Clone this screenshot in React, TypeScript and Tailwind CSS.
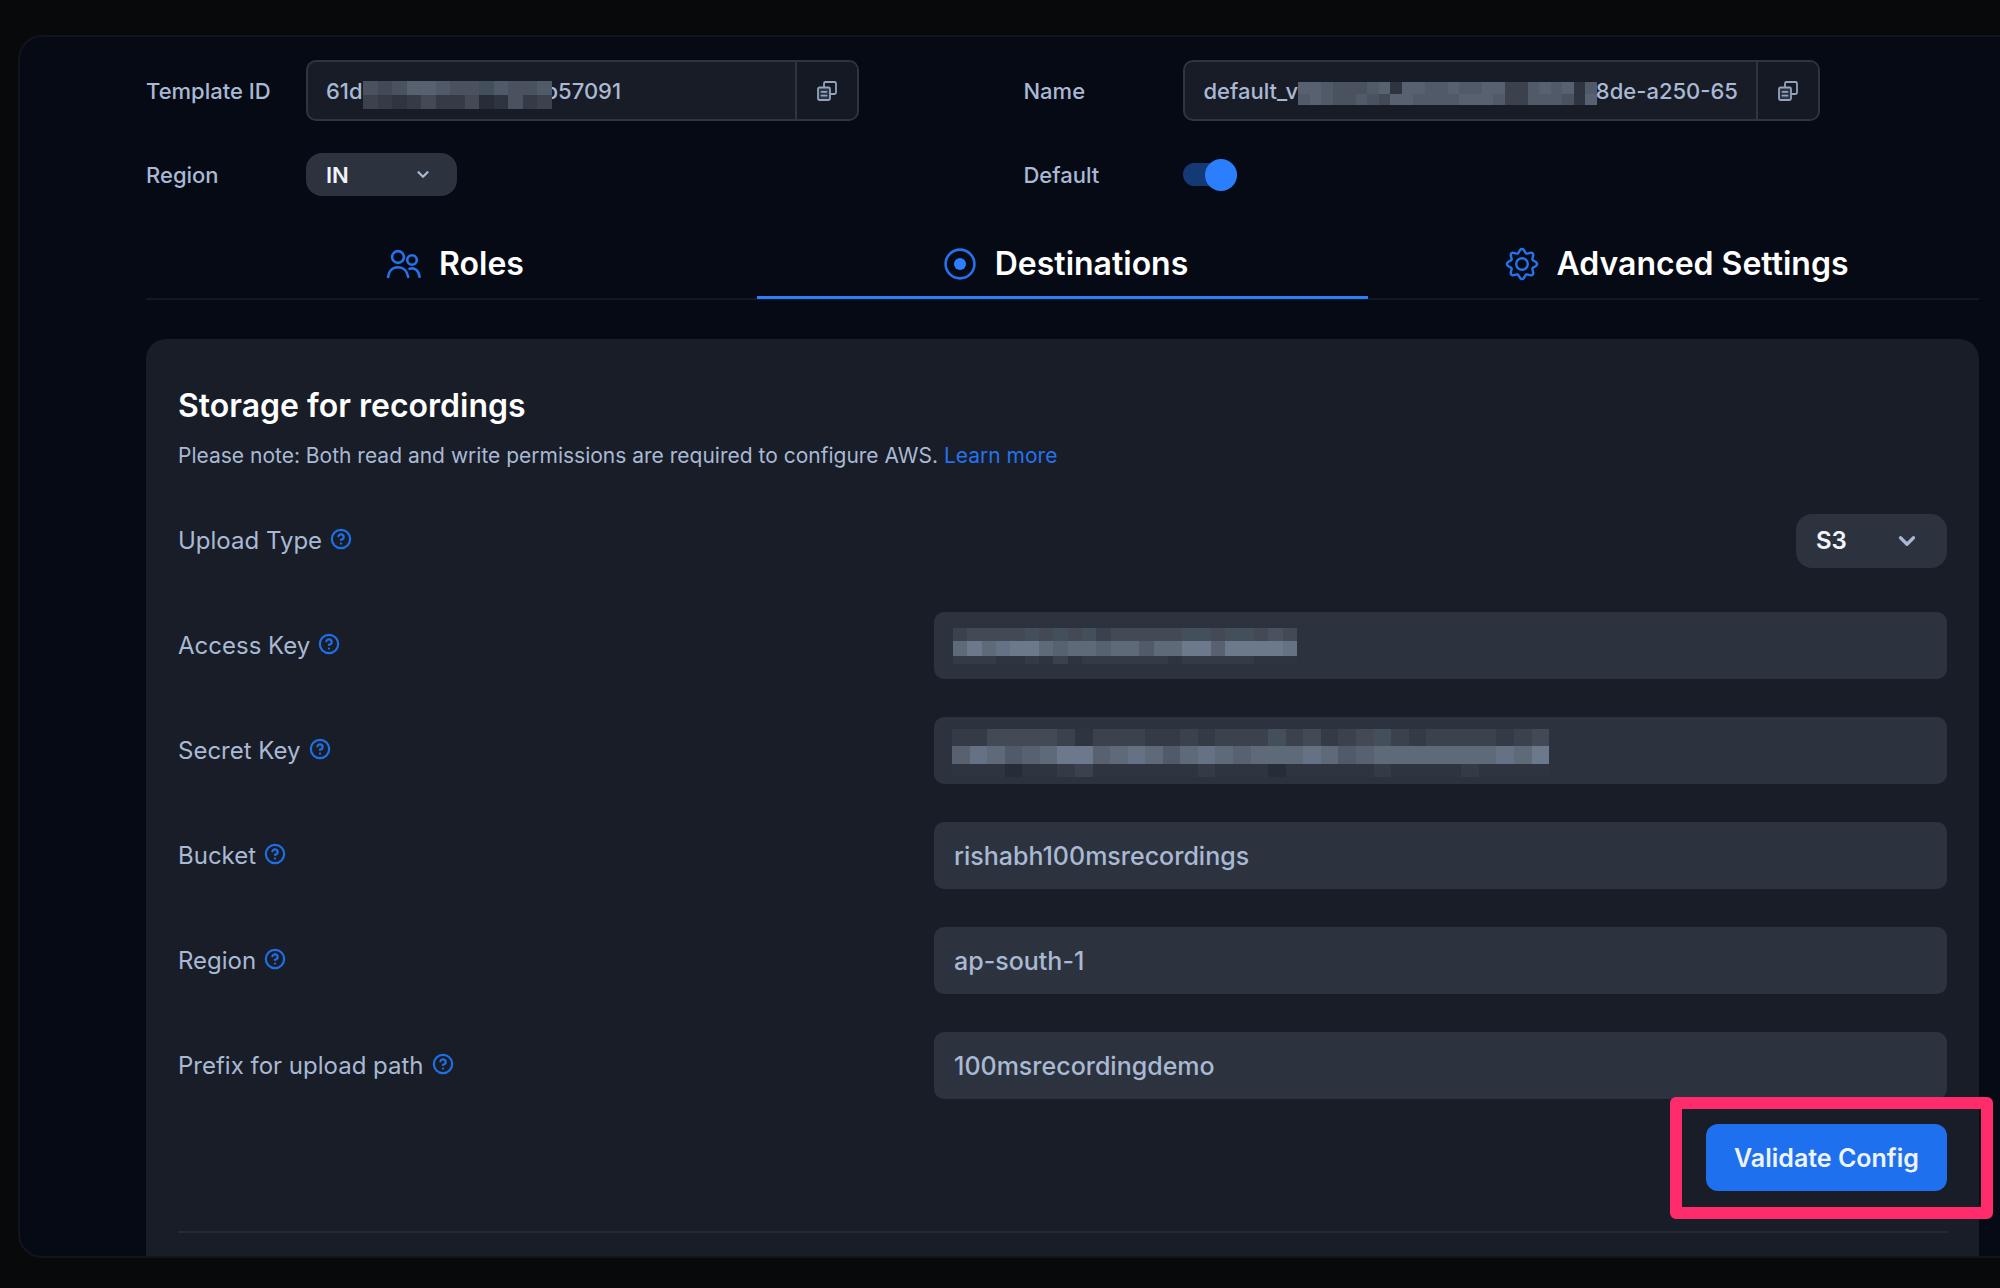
import React from 'react';
import { ChevronDown, CircleQuestionMark } from 'lucide-react';

/* ---------- icons ---------- */

function PeopleIcon() {
  return (
    <svg width="36" height="32" viewBox="0 0 36 32" fill="none" stroke="#2572ed" strokeWidth="2.6" strokeLinecap="round" aria-hidden="true">
      <circle cx="13" cy="9" r="5.9" />
      <circle cx="27" cy="12" r="4.8" />
      <path d="M3 29c.6-6 4.600-9.800 10-9.800S22.400 23 23.200 29" />
      <path d="M24.600 20.800c5.400-1.600 9.400 2 10 8" />
    </svg>
  );
}

function TargetIcon() {
  return (
    <svg width="34" height="34" viewBox="0 0 34 34" fill="none" aria-hidden="true">
      <circle cx="17" cy="17" r="14.400" stroke="#2572ed" strokeWidth="2.600" />
      <circle cx="17" cy="17" r="6" fill="#2b7fff" />
    </svg>
  );
}

const gearPoints = Array.from({ length: 120 }, (_, i) => {
  const a = (i / 120) * Math.PI * 2;
  const r = 13.2 + 1.9 * Math.cos(8 * a);
  return `${(17 + r * Math.cos(a)).toFixed(2)},${(17 + r * Math.sin(a)).toFixed(2)}`;
}).join(' ');

function GearIcon() {
  return (
    <svg width="34" height="34" viewBox="0 0 34 34" fill="none" stroke="#2572ed" strokeWidth="2.4" strokeLinejoin="round" aria-hidden="true">
      <polygon points={gearPoints} />
      <circle cx="17" cy="17" r="5.8" />
    </svg>
  );
}

function CopyIcon() {
  return (
    <svg width="20" height="20" viewBox="0 0 20 20" fill="none" stroke="#93a3bd" strokeWidth="1.8" strokeLinejoin="round" strokeLinecap="round" aria-hidden="true">
      <path d="M7 6V2.500a1.500 1.500 0 0 1 1.500-1.500H17.500a1.500 1.500 0 0 1 1.500 1.500V11.500a1.500 1.500 0 0 1-1.500 1.500H14" />
      <rect x="1" y="6.500" width="12" height="12.500" rx="1.500" fill="#2c3544" />
      <path d="M4.500 10.800h5M4.500 14.600h5" />
    </svg>
  );
}

/* ---------- redaction mosaics ---------- */

type MosaicRow = { height: number; cells: string };

// One letter per cell, from the darkest shade to the lightest.
const shades: Record<string, string> = {
  a: '#272d38',
  b: '#2f3540',
  c: '#343a46',
  d: '#3b414d',
  e: '#434955',
  f: '#43505c',
  g: '#4a515f',
  h: '#505a68',
  i: '#576170',
  j: '#5f6a79',
  k: '#657184',
  l: '#6c788b',
};

function Mosaic({ rows, className }: { rows: MosaicRow[]; className: string }) {
  return (
    <div className={`pointer-events-none absolute flex flex-col ${className}`} aria-hidden="true">
      {rows.map((row, r) => (
        <div key={r} className="flex" style={{ height: row.height }}>
          {row.cells.split('').map((c, i) => (
            <span key={i} className="flex-1" style={{ backgroundColor: shades[c] }} />
          ))}
        </div>
      ))}
    </div>
  );
}

const idMosaic: MosaicRow[] = [
  { height: 14, cells: 'gegiihggfhggh' },
  { height: 14, cells: 'dcbcecceabgcd' },
];

const nameMosaic: MosaicRow[] = [
  { height: 12, cells: 'iihggghibiihhihhiiddhihibh' },
  { height: 11, cells: 'hihgghgeiihhhhiiihddhhhgbi' },
];

const accessMosaic: MosaicRow[] = [
  { height: 13, cells: 'deeeefefefdeeeeeffeffege' },
  { height: 15, cells: 'jljklljijjijjhjjllillllk' },
  { height: 8, cells: 'cccbbcbdbccccccbcccccbbb' },
];

const secretMosaic: MosaicRow[] = [
  { height: 17, cells: 'cceeeedbdddccdcdddfdecdefdcddddcde' },
  { height: 18, cells: 'ikjhijllijkjhjkjijjjkjhijjjjjjjkjl' },
  { height: 13, cells: 'bbbabbcdbbbbbbcbbbabbbbbcbbbbcbbbb' },
];

/* ---------- controls ---------- */

function CopyField({
  id,
  label,
  value,
  width,
  children,
}: {
  id: string;
  label: string;
  value: string;
  width: string;
  children: React.ReactNode;
}) {
  return (
    <div className="flex items-center">
      <label htmlFor={id} className="w-40 shrink-0">
        {label}
      </label>
      <div className={`relative flex h-[61px] w-full overflow-hidden rounded-[10px] border-2 border-[#30343d] bg-[#181c26] ${width}`}>
        <input id={id} readOnly defaultValue={value} className="min-w-0 flex-1 bg-transparent pl-[18px] outline-none" />
        {children}
        <button type="button" aria-label={`Copy ${label}`} className="flex w-[62px] items-center justify-center border-l-2 border-[#30343d] bg-[#141923]">
          <CopyIcon />
        </button>
      </div>
    </div>
  );
}

function Select({ id, value, className, chevron }: { id: string; value: string; className: string; chevron: string }) {
  return (
    <div className="relative w-[151px]">
      <select id={id} defaultValue={value} className={`w-full appearance-none rounded-2xl bg-[#2d333e] pl-5 font-semibold text-[#f1f4fa] outline-none ${className}`}>
        <option>{value}</option>
      </select>
      <div className={`pointer-events-none absolute inset-y-0 right-0 flex items-center text-[#a9b9d4] ${chevron}`}>
        <ChevronDown className="size-full" strokeWidth={3} />
      </div>
    </div>
  );
}

function FieldLabel({ id, children }: { id: string; children: string }) {
  return (
    <div className="flex items-center gap-2">
      <label htmlFor={id}>{children}</label>
      <button type="button" aria-label={`About ${children}`} className="pb-1 text-[#1f6fe5]">
        <CircleQuestionMark className="size-[22px]" strokeWidth={2.4} />
      </button>
    </div>
  );
}

function FieldRow({ id, label, value, children }: { id: string; label: string; value?: string; children?: React.ReactNode }) {
  return (
    <div className="grid grid-cols-[756fr_1013fr] items-center">
      <FieldLabel id={id}>{label}</FieldLabel>
      <div className="relative">
        <input id={id} defaultValue={value ?? ''} className="h-[67px] w-full rounded-[10px] bg-[#2d333e] px-5 text-[25px] font-medium outline-none" />
        {children}
      </div>
    </div>
  );
}

function Tab({ icon, label, active }: { icon: React.ReactNode; label: string; active?: boolean }) {
  return (
    <button
      type="button"
      role="tab"
      aria-selected={!!active}
      className={`-mb-px flex h-[71px] items-center justify-center gap-[18px] border-b-[3px] pt-1 pl-1.5 text-[32px] leading-10 font-semibold text-white ${
        active ? 'border-[#2b7fff]' : 'border-transparent'
      }`}
    >
      {icon}
      {label}
    </button>
  );
}

/* ---------- page ---------- */

export default function App() {
  return (
    <div className="flex min-h-screen flex-col overflow-x-hidden bg-[#08090b] pt-[35px] pb-[30px] pl-[18px] font-['Inter',sans-serif] leading-8 text-[#a9b9d4]">
      <main className="flex flex-1 flex-col rounded-l-3xl border-y-2 border-l-2 border-[#11151c] bg-[#050a14] pt-[23px] pr-[21px] pl-[126px]">
        <div className="grid grid-cols-[877fr_955fr] gap-y-8 text-[22px] font-medium">
          <CopyField id="template-id" label="Template ID" value={'61d' + '\u2003'.repeat(8) + '\u00a0b57091'} width="max-w-[553px]">
            <Mosaic rows={idMosaic} className="top-[19px] left-[55px] w-[189px]" />
          </CopyField>
          <CopyField id="name" label="Name" value={'default_v' + '\u2003'.repeat(13) + '\u00a0\u00a08de-a250-65'} width="max-w-[637px]">
            <Mosaic rows={nameMosaic} className="top-5 left-[113px] w-[298px]" />
          </CopyField>
          <div className="flex items-center">
            <label htmlFor="region" className="w-40">
              Region
            </label>
            <Select id="region" value="IN" className="h-[43px] text-[22px]" chevron="mr-[25px] w-[18px]" />
          </div>
          <div className="flex items-center">
            <label htmlFor="default" className="w-40">
              Default
            </label>
            <input
              id="default"
              type="checkbox"
              role="switch"
              defaultChecked
              className="flex h-[23px] w-[54px] appearance-none items-center justify-end rounded-full bg-[#143a75] before:size-8 before:shrink-0 before:rounded-full before:bg-[#2b7fff]"
            />
          </div>
        </div>

        <div role="tablist" className="mt-8 grid grid-cols-3 border-b-2 border-[#131821]">
          <Tab icon={<PeopleIcon />} label="Roles" />
          <Tab icon={<TargetIcon />} label="Destinations" active />
          <Tab icon={<GearIcon />} label="Advanced Settings" />
        </div>

        <section className="mt-[39px] flex-1 rounded-t-[20px] bg-[#181d27] px-8 pt-[47px] text-[24px]">
          <h2 className="text-[32px] leading-10 font-semibold text-white">Storage for recordings</h2>
          <p className="mt-4 text-[21px] leading-7">
            Please note: Both read and write permissions are required to configure AWS.{' '}
            <a href="#learn-more" className="text-[#2572ed]">
              Learn more
            </a>
          </p>

          <div className="mt-11 flex items-center justify-between">
            <FieldLabel id="upload-type">Upload Type</FieldLabel>
            <Select id="upload-type" value="S3" className="h-[54px] text-[24px]" chevron="mr-[27px] w-[26px]" />
          </div>

          <div className="mt-11 flex flex-col gap-[38px]">
            <FieldRow id="access-key" label="Access Key">
              <Mosaic rows={accessMosaic} className="top-4 left-[19px] w-[344px]" />
            </FieldRow>
            <FieldRow id="secret-key" label="Secret Key">
              <Mosaic rows={secretMosaic} className="top-3 left-[18px] w-[597px]" />
            </FieldRow>
            <FieldRow id="bucket" label="Bucket" value="rishabh100msrecordings" />
            <FieldRow id="s3-region" label="Region" value="ap-south-1" />
            <FieldRow id="prefix" label="Prefix for upload path" value="100msrecordingdemo" />
          </div>

          <div className="mt-[25px] flex justify-end">
            <div className="relative">
              <button type="button" className="h-[67px] w-[241px] rounded-xl bg-[#1f70ee] text-[25px] font-semibold text-[#eef4ff]">
                Validate Config
              </button>
              <div className="pointer-events-none absolute -top-[27px] -right-[46px] -bottom-[28px] -left-[36px] rounded-md border-12 border-[#ff2b6b]" />
            </div>
          </div>

          <hr className="mt-10 border-t-2 border-[#242a35]" />
        </section>
      </main>
    </div>
  );
}
